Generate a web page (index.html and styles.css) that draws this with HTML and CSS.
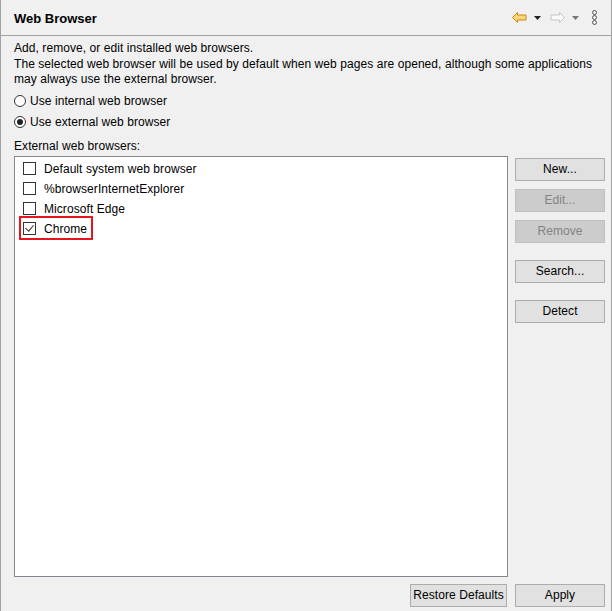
FILE: index.html
```html
<!DOCTYPE html>
<html lang="en">
  <head>
    <meta charset="UTF-8" />
    <title>Web Browser</title>
    <link rel="stylesheet" href="styles.css">
  </head>
  <body>
    <div class="page">
      <div class="header">
        <div class="title">Web Browser</div>
        <div class="tools">
          <svg class="arrow" width="15" height="11" viewBox="0 0 15 11">
            <path d="M0.5 5.5 L5.5 0.5 L5.5 3 L14 3 L14 8 L5.5 8 L5.5 10.5 Z" fill="#f9d67a" stroke="#c98a12" stroke-width="1" stroke-linejoin="round"/>
          </svg>
          <svg class="drop" width="7" height="4" viewBox="0 0 7 4"><path d="M0 0 L7 0 L3.5 4 Z" fill="#222"/></svg>
          <svg class="arrow" width="15" height="11" viewBox="0 0 15 11">
            <path d="M14.5 5.5 L9.5 0.5 L9.5 3 L1 3 L1 8 L9.5 8 L9.5 10.5 Z" fill="#fafafa" stroke="#c4c4c4" stroke-width="1" stroke-linejoin="round"/>
          </svg>
          <svg class="drop" width="7" height="4" viewBox="0 0 7 4"><path d="M0 0 L7 0 L3.5 4 Z" fill="#777"/></svg>
          <svg class="menu" width="7" height="15" viewBox="0 0 7 15">
            <circle cx="3.5" cy="2.5" r="2" fill="none" stroke="#555" stroke-width="1"/>
            <circle cx="3.5" cy="7.5" r="2" fill="none" stroke="#555" stroke-width="1"/>
            <circle cx="3.5" cy="12.5" r="2" fill="none" stroke="#555" stroke-width="1"/>
          </svg>
        </div>
      </div>

      <div class="content">
        <p class="desc">Add, remove, or edit installed web browsers.<br>The selected web browser will be used by default when web pages are opened, although some applications may always use the external browser.</p>

        <div class="radio-row"><span class="radio"></span>Use internal web browser</div>
        <div class="radio-row"><span class="radio checked"></span>Use external web browser</div>

        <div class="group-label">External web browsers:</div>

        <div class="browsers">
          <div class="list">
            <div class="item"><span class="check"></span>Default system web browser</div>
            <div class="item"><span class="check"></span>%browserInternetExplorer</div>
            <div class="item"><span class="check"></span>Microsoft Edge</div>
            <div class="item marked"><span class="check checked"></span>Chrome</div>
          </div>
          <div class="side-buttons">
            <button class="btn">New...</button>
            <button class="btn" disabled>Edit...</button>
            <button class="btn" disabled>Remove</button>
            <button class="btn spaced">Search...</button>
            <button class="btn spaced">Detect</button>
          </div>
        </div>

        <div class="footer">
          <button class="btn wide">Restore Defaults</button>
          <button class="btn">Apply</button>
        </div>
      </div>
    </div>
  </body>
</html>
```

FILE: styles.css
```css
* {
  padding: 0;
  margin: 0;
  box-sizing: border-box;
}
html,
body {
  width: 100%;
  height: 100%;
}
body {
  background: #f0f0f0;
  font-family: "Liberation Sans", Arial, sans-serif;
  font-size: 12px;
  letter-spacing: 0.07px;
  color: #000;
}
.page {
  width: 612px;
  height: 611px;
  border-left: 1px solid #a0a0a0;
  border-right: 1px solid #a0a0a0;
  display: flex;
  flex-direction: column;
}
.header {
  height: 36px;
  border-bottom: 1px solid #a0a0a0;
  display: flex;
  align-items: center;
  padding: 2px 13px 0 13px;
  flex-shrink: 0;
}
.title {
  font-weight: bold;
  font-size: 13px;
  letter-spacing: 0;
  flex: 1;
}
.tools {
  display: flex;
  align-items: center;
  margin-top: -2px;
}
.tools .drop {
  margin: 0 9px 0 7px;
}
.tools .drop:nth-of-type(4) {
  margin-right: 12px;
}
.content {
  flex: 1;
  display: flex;
  flex-direction: column;
  padding: 5px 6px 4px 13px;
}
.desc {
  line-height: 15.5px;
  margin-bottom: 3px;
}
.radio-row {
  display: flex;
  align-items: center;
  height: 21px;
}
.radio {
  width: 12px;
  height: 12px;
  border: 1px solid #333;
  border-radius: 50%;
  background: #fff;
  margin-right: 4px;
  display: flex;
  align-items: center;
  justify-content: center;
}
.radio.checked::after {
  content: "";
  width: 6px;
  height: 6px;
  border-radius: 50%;
  background: #222;
}
.group-label {
  margin-top: 6px;
  height: 16px;
}
.browsers {
  display: flex;
  gap: 7px;
  margin-top: 1px;
}
.list {
  width: 495px;
  height: 421px;
  background: #fff;
  border: 1px solid #828790;
  padding-top: 2px;
}
.item {
  position: relative;
  display: flex;
  align-items: center;
  height: 20px;
  padding-left: 8px;
}
.check {
  width: 13px;
  height: 13px;
  border: 1px solid #333;
  background: #fff;
  margin-right: 8px;
  position: relative;
}
.check.checked::after {
  content: "";
  position: absolute;
  left: 3px;
  top: 0px;
  width: 4px;
  height: 7px;
  border-right: 1px solid #333;
  border-bottom: 1px solid #333;
  transform: rotate(40deg);
}
.item.marked::before {
  content: "";
  position: absolute;
  left: 4px;
  top: -3px;
  width: 70px;
  height: 20px;
  border: 2px solid #e8141b;
}
.side-buttons {
  display: flex;
  flex-direction: column;
  gap: 8px;
  padding-top: 2px;
}
.btn {
  width: 90px;
  height: 23px;
  background: #e1e1e1;
  border: 1px solid #adadad;
  font-family: inherit;
  font-size: 12px;
  letter-spacing: 0.07px;
  color: #000;
}
.btn:disabled {
  background: #cccccc;
  border-color: #bfbfbf;
  color: #838383;
}
.btn.spaced {
  margin-top: 9px;
}
.footer {
  display: flex;
  justify-content: flex-end;
  gap: 8px;
  margin-top: 7px;
}
.btn.wide {
  width: 97px;
}
```
